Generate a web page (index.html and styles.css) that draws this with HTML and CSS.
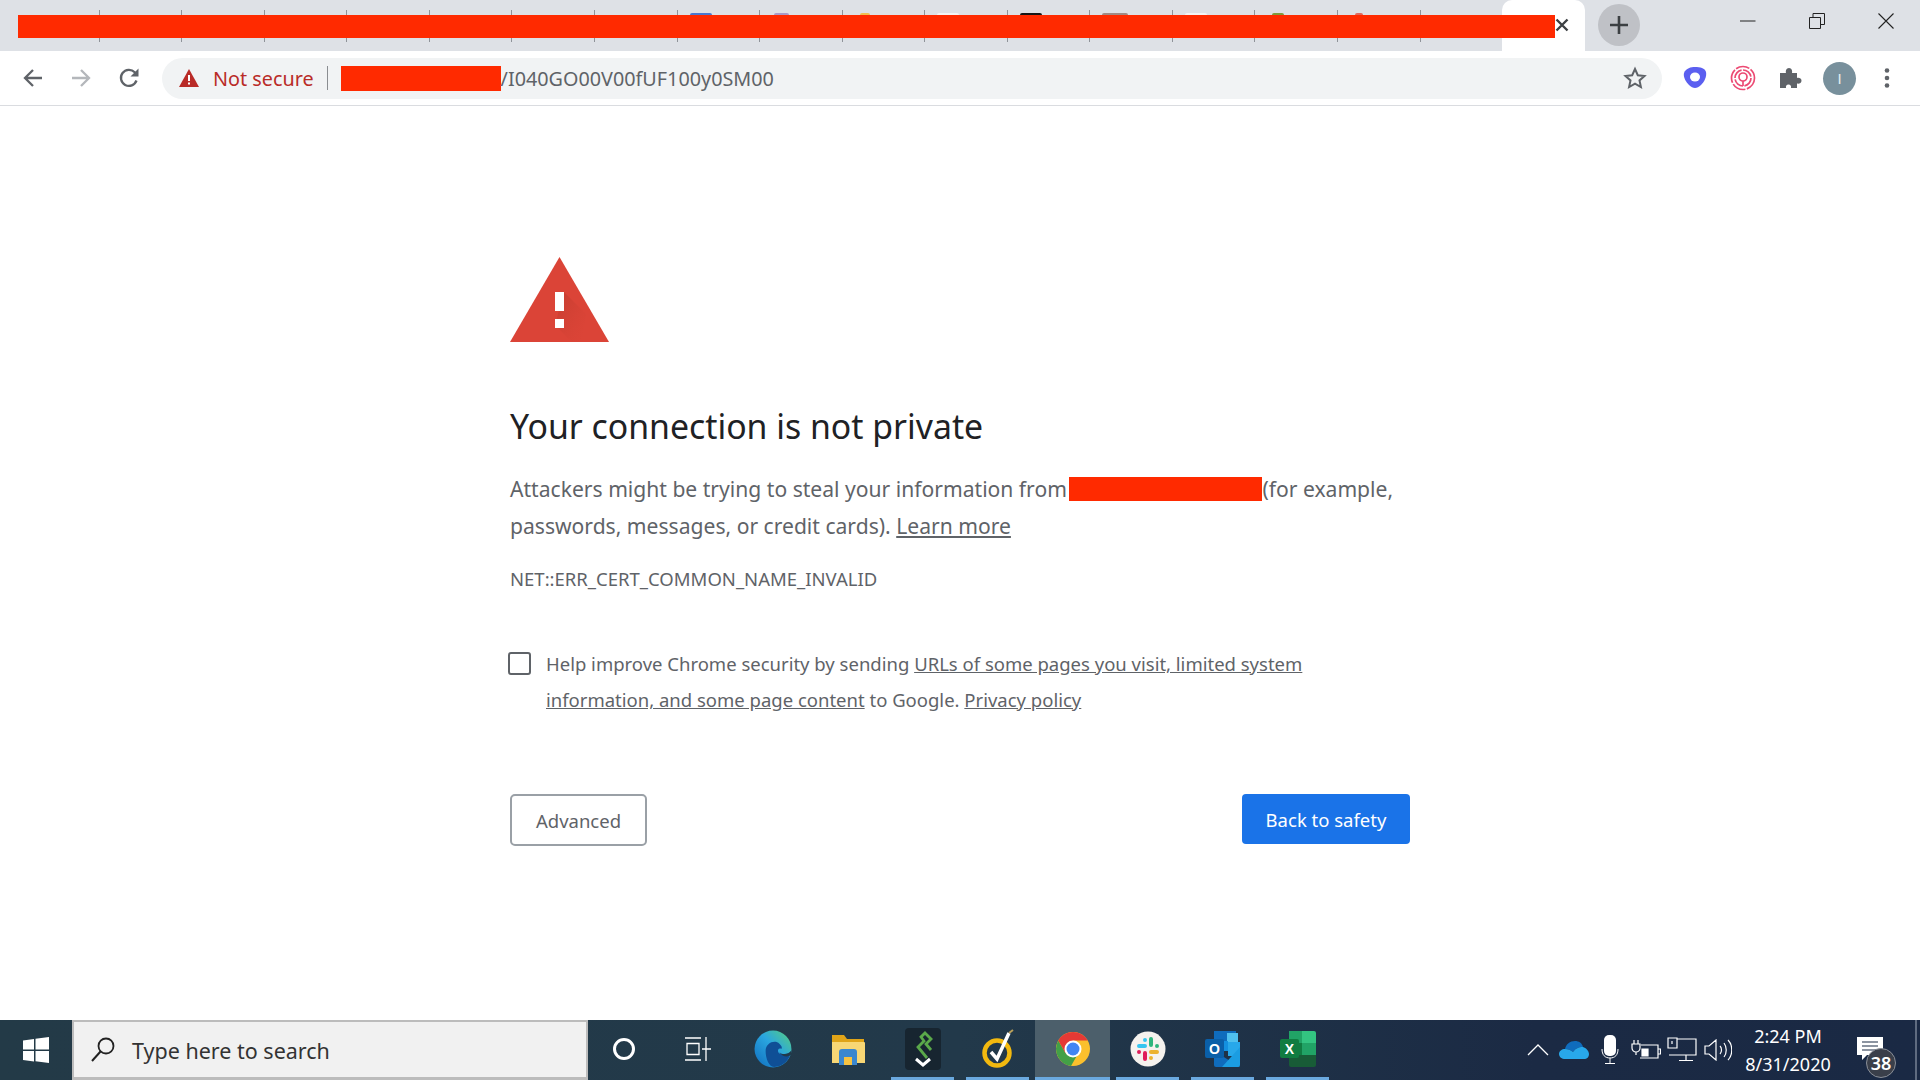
FILE: index.html
```html
<!DOCTYPE html>
<html lang="en">
<head>
    <meta charset="UTF-8">
    <meta name="viewport" content="width=device-width, initial-scale=1.0">
    <title>Privacy error</title>
    <link rel="stylesheet" href="styles.css">
</head>
<body>
    <div class="tabstrip">
        <div class="tabs">
            <div class="tab"></div><div class="tab"></div><div class="tab"></div>
            <div class="tab"></div><div class="tab"></div><div class="tab"></div>
            <div class="tab"></div><div class="tab"></div>
            <div class="tab"><i class="fav blue"></i></div>
            <div class="tab"><i class="fav purple"></i></div>
            <div class="tab"><i class="fav yellow"></i></div>
            <div class="tab"><i class="fav white"></i></div>
            <div class="tab"><i class="fav black"></i></div>
            <div class="tab"><i class="fav gray"></i></div>
            <div class="tab"><i class="fav white"></i></div>
            <div class="tab"><i class="fav green"></i></div>
            <div class="tab"><i class="fav red"></i></div>
            <div class="tab last"></div>
        </div>
        <div class="tab-active">
            <svg class="tab-close" width="16" height="16" viewBox="0 0 16 16"><path d="M2.500 2.500l11 11M13.500 2.500l-11 11" stroke="#3c4043" stroke-width="2.400"/></svg>
        </div>
        <div class="newtab">
            <svg width="20" height="20" viewBox="0 0 20 20"><path d="M10 1v18M1 10h18" stroke="#3c4043" stroke-width="2.600"/></svg>
        </div>
        <div class="winctrls">
            <svg width="16" height="16" viewBox="0 0 16 16"><path d="M0 8h15.500" stroke="#222" stroke-width="1"/></svg>
            <svg width="16" height="16" viewBox="0 0 16 16"><path d="M.5 4.500h11v11H.5zM4 4.500V.5h11.500v11H11.500" fill="none" stroke="#222" stroke-width="1"/></svg>
            <svg width="16" height="16" viewBox="0 0 16 16"><path d="M.5.5l15 15M15.500.5l-15 15" stroke="#222" stroke-width="1.100"/></svg>
        </div>
        <div class="redact-tabs"></div>
    </div>

    <div class="toolbar">
        <svg class="navbtn" width="22" height="22" viewBox="0 0 22 22"><path d="M20 11H3M11 3l-8 8 8 8" fill="none" stroke="#5f6368" stroke-width="2.300"/></svg>
        <svg class="navbtn" width="22" height="22" viewBox="0 0 22 22"><path d="M2 11h17M11 3l8 8-8 8" fill="none" stroke="#b4b7bb" stroke-width="2.300"/></svg>
        <svg class="navbtn" width="22" height="22" viewBox="0 0 22 22"><path d="M18.500 13.500A8 8 0 1 1 16.700 5.300L19 7.500" fill="none" stroke="#5f6368" stroke-width="2.300"/><path d="M20.500 1.500v8h-8z" fill="#5f6368"/></svg>
        <div class="omnibox">
            <svg class="warn-small" width="20" height="18" viewBox="0 0 20 18"><path d="M10 0l10 18H0z" fill="#b92b27"/><path d="M9 6h2v6H9zM9 13.500h2v2H9z" fill="#fff"/></svg>
            <span class="notsecure">Not secure</span>
            <span class="omni-sep"></span>
            <span class="redact-url"></span>
            <span class="url">/I040GO00V00fUF100y0SM00</span>
            <svg class="star" width="24" height="24" viewBox="0 0 24 24"><path d="M12 3l2.800 6.200 6.700.700-5 4.500 1.400 6.600-5.900-3.400L6.100 21l1.400-6.600-5-4.500 6.700-.700z" fill="none" stroke="#5f6368" stroke-width="2"/></svg>
        </div>
        <div class="exts">
            <svg width="26" height="26" viewBox="0 0 26 26"><path d="M2 8C4 3 9 2 13 2c5 0 10 1 11 5 1 5-2 10-5 13-2 2-4 3-6 3s-4-1-6-3C4 17 1 12 2 8z" fill="#5b5ff0"/><ellipse cx="13" cy="12" rx="5" ry="4.500" fill="#fff"/></svg>
            <svg width="26" height="26" viewBox="0 0 26 26" fill="none" stroke="#ec4a73" stroke-width="1.700"><circle cx="13" cy="13" r="11.500" stroke-dasharray="14 1.500"/><circle cx="13" cy="13" r="8" stroke-dasharray="11 1.500"/><circle cx="13" cy="12" r="4"/><path d="M13 16v5"/></svg>
            <svg width="24" height="24" viewBox="0 0 24 24"><path d="M2 7h6c-.6-2 .3-5 3-5s3.600 3 3 5h5v5c2-.6 4.500.3 4.500 2.700S21 18 19 17.500V22h-6c.5-2-.6-3.500-2.500-3.500S7.500 20 8 22H2z" fill="#5f6368"/></svg>
            <span class="avatar">I</span>
            <svg width="24" height="24" viewBox="0 0 24 24"><circle cx="12" cy="4.500" r="2.300" fill="#5f6368"/><circle cx="12" cy="12" r="2.300" fill="#5f6368"/><circle cx="12" cy="19.500" r="2.300" fill="#5f6368"/></svg>
        </div>
    </div>

    <div class="main">
        <div class="interstitial">
            <svg class="warn-big" width="99" height="85" viewBox="0 0 99 85">
                <defs>
                    <linearGradient id="warnshade" x1="0" y1="0" x2="1" y2="1"><stop offset="0" stop-color="#b8392c" stop-opacity=".7"/><stop offset="1" stop-color="#db4437" stop-opacity="0"/></linearGradient>
                </defs>
                <path d="M49.500 0L99 85H0z" fill="#db4437"/>
                <path d="M54 35l22 22-4 28H62L45 68z" fill="url(#warnshade)"/>
                <path d="M45 35h9v19h-9zM45 62h9v9h-9z" fill="#fff"/>
            </svg>
            <h1>Your connection is not private</h1>
            <p class="desc">Attackers might be trying to steal your information from <span class="redact-host"></span>(for example, passwords, messages, or credit cards). <a href="#">Learn more</a></p>
            <div class="errcode">NET::ERR_CERT_COMMON_NAME_INVALID</div>
            <div class="optin">
                <span class="checkbox"></span>
                <p>Help improve Chrome security by sending <a href="#">URLs of some pages you visit, limited system information, and some page content</a> to Google. <a href="#">Privacy policy</a></p>
            </div>
            <div class="btns">
                <button class="advanced" type="button">Advanced</button>
                <button class="safety" type="button">Back to safety</button>
            </div>
        </div>
    </div>

    <div class="taskbar">
        <div class="start">
            <svg width="26" height="26" viewBox="0 0 26 26"><path d="M0 3.500l11-1.500v10.500H0zM12.500 1.800L26 0v12.500H12.500zM0 14h11v10.500L0 23zM12.500 14H26v12l-13.500-1.800z" fill="#fff"/></svg>
        </div>
        <div class="searchbox">
            <svg width="28" height="28" viewBox="0 0 28 28"><circle cx="17" cy="10" r="7.500" fill="none" stroke="#222" stroke-width="1.800"/><path d="M11.500 15.500L3 25" stroke="#222" stroke-width="2"/></svg>
            <span>Type here to search</span>
        </div>
        <div class="slot cortana">
            <svg width="24" height="24" viewBox="0 0 24 24"><circle cx="12" cy="12" r="9.500" fill="none" stroke="#fff" stroke-width="3"/></svg>
        </div>
        <div class="slot">
            <svg width="26" height="26" viewBox="0 0 26 26" fill="none" stroke="#fff" stroke-width="1.300"><path d="M0 2h16M0 24h16M2 7.500h12v11H2zM21 1v24M26 13h-9"/></svg>
        </div>
        <div class="slot">
            <svg width="38" height="38" viewBox="0 0 36 36">
                <defs>
                    <linearGradient id="edge1" x1="0" y1="1" x2="1" y2="0"><stop offset="0" stop-color="#0f6cbd"/><stop offset=".55" stop-color="#2aa6e0"/><stop offset="1" stop-color="#58cf7c"/></linearGradient>
                </defs>
                <circle cx="18" cy="18" r="17.500" fill="url(#edge1)"/>
                <path d="M11 20C11 12 20 9 24 13c2 2 3 3 2 5-2-1-4 0-3 3 2 3 9 3 12-1-1 9-8 15-16 15C14 35 11 27 11 20z" fill="#0f4f96"/>
                <path d="M24 21c3 3 9 2 11-1l.5 3c-3 3-8 3-11.500-2z" fill="#22394a"/>
            </svg>
        </div>
        <div class="slot">
            <svg width="36" height="32" viewBox="0 0 36 32"><path d="M2 2h12l3 4h17v4H2z" fill="#e0a418"/><path d="M2 9h32a1 1 0 0 1 1 1v20H2z" fill="#f8d775"/><path d="M9 32V19a3 3 0 0 1 3-3h12a3 3 0 0 1 3 3v13h-5v-8h-8v8z" fill="#3a87cf"/><path d="M14 24h8v8h-8z" fill="#f5c242"/></svg>
        </div>
        <div class="slot run">
            <svg width="36" height="42" viewBox="0 0 36 42"><rect width="36" height="42" rx="4" fill="#172530"/><path d="M22 30L13 19l6-6-3-4 4-4 6 6-5 5 5 6" fill="none" stroke="#5aa84a" stroke-width="2.800"/><path d="M11 31l7 6 7-6" fill="none" stroke="#fff" stroke-width="3"/></svg>
        </div>
        <div class="slot run">
            <svg width="34" height="40" viewBox="0 0 34 40"><circle cx="16" cy="24" r="12.500" fill="none" stroke="#f2b90f" stroke-width="4.500"/><path d="M10 23l6 7L28 4" fill="none" stroke="#fff" stroke-width="3.500"/><path d="M28 4l4-3" stroke="#b9a05a" stroke-width="2"/></svg>
        </div>
        <div class="slot run current">
            <svg width="36" height="36" viewBox="0 0 36 36"><circle cx="18" cy="18" r="17" fill="#fbc02d"/><path d="M3.300 9.500A17 17 0 0 0 16 34.900l7.300-12.600H10.600z" fill="#43a047"/><path d="M18 1a17 17 0 0 1 14.700 8.500H18l-7.400 12.800-7.300-12.800A17 17 0 0 1 18 1z" fill="#e53935"/><circle cx="18" cy="18" r="8.500" fill="#fff"/><circle cx="18" cy="18" r="6.500" fill="#4285f4"/></svg>
        </div>
        <div class="slot run">
            <svg width="36" height="36" viewBox="0 0 36 36" fill="none" stroke-width="4" stroke-linecap="round"><circle cx="18" cy="18" r="17.500" fill="#f5f2ee"/><path d="M9 15h6M15 9h0" stroke="#36c5f0"/><path d="M21 8v6M27 15h0" stroke="#2eb67d"/><path d="M21 21h6M21 27h0" stroke="#ecb22e"/><path d="M15 22v6M9 21h0" stroke="#e01e5a"/></svg>
        </div>
        <div class="slot run">
            <svg width="36" height="38" viewBox="0 0 36 38"><path d="M9 1h22v10H9z" fill="#0f6cbd"/><path d="M22 3h11v9H22z" fill="#50c0ee"/><path d="M9 11h14v10H9z" fill="#1490df"/><path d="M23 12h12v14H23z" fill="#28a8ea"/><path d="M9 21l26 16H11a2 2 0 0 1-2-2z" fill="#0f6cbd"/><path d="M35 17v18a2 2 0 0 1-2 2H17z" fill="#1b9de2"/><rect x="0" y="9" width="19" height="19" rx="2" fill="#0a5fa8"/><text class="ic-letter" x="9.500" y="24">O</text></svg>
        </div>
        <div class="slot run">
            <svg width="36" height="38" viewBox="0 0 36 38"><path d="M9 1h13v12H9z" fill="#21a366"/><path d="M22 1h12a2 2 0 0 1 2 2v10H22z" fill="#33c481"/><path d="M9 13h13v12H9z" fill="#107c41"/><path d="M22 13h14v12H22z" fill="#21a366"/><path d="M9 25h27v10a2 2 0 0 1-2 2H11a2 2 0 0 1-2-2z" fill="#185c37"/><rect x="0" y="9" width="19" height="19" rx="2" fill="#107c41"/><text class="ic-letter" x="9.500" y="24">X</text></svg>
        </div>
        <div class="tray">
            <svg width="22" height="14" viewBox="0 0 22 14"><path d="M1 12L11 2l10 10" fill="none" stroke="#fff" stroke-width="1.300"/></svg>
            <svg width="30" height="20" viewBox="0 0 30 20"><path d="M6 9c1-5 5-8 10-8 4 0 7 2 8 6-5 0-8 2-10 5-2-2-5-3-8-3z" fill="#0f6cbd"/><path d="M24 7c3 1 6 4 6 7 0 3-2 5-5 5H6c-3 0-6-2-6-5 0-3 3-5 6-5 3 0 6 1 8 3 2-3 5-5 10-5z" fill="#28a8ea"/></svg>
            <svg width="20" height="30" viewBox="0 0 20 30"><rect x="4" y="0" width="12" height="21" rx="5" fill="#fff"/><path d="M2 14c0 6 3 9 8 9s8-3 8-9M10 23v5M5 28.500h10" fill="none" stroke="#fff" stroke-width="1"/></svg>
            <svg width="30" height="22" viewBox="0 0 30 22" fill="none" stroke="#fff" stroke-width="1.200"><path d="M10 6h17v13H9M27 10h2.500v5H27"/><path d="M3 1v4M7 1v4M1 5h8v4a4 4 0 0 1-8 0zM5 13v3"/><path d="M11 10h6v7h-6z" fill="#fff"/></svg>
            <svg width="30" height="26" viewBox="0 0 30 26" fill="none" stroke="#fff" stroke-width="1.200"><path d="M10 2h19v16H2M19 18v5M12 23.500h14M1 1h9v10H1zM5 4v3"/></svg>
            <svg width="28" height="22" viewBox="0 0 28 22" fill="none" stroke="#fff" stroke-width="1.200"><path d="M1 7h4l7-6v20l-7-6H1zM16 7c2 2 2 6 0 8M20 4c3 4 3 10 0 14M24 1c5 5 5 15 0 20"/></svg>
        </div>
        <div class="clock">
            <div>2:24 PM</div>
            <div>8/31/2020</div>
        </div>
        <div class="notify">
            <svg width="26" height="24" viewBox="0 0 26 24"><path d="M0 0h26v18H10l-5 5v-5H0z" fill="#fff"/><path d="M5 5h16M5 9h16M5 13h16" stroke="#1b2a44" stroke-width="1.200"/></svg>
            <span class="badge">38</span>
        </div>
    </div>
</body>
</html>
```

FILE: styles.css
```css
*{
    box-sizing: border-box;
}
html, body{
    margin: 0;
    padding: 0;
    height: 100%;
}
body{
    display: flex;
    flex-direction: column;
    width: 1920px;
    height: 1080px;
    overflow: hidden;
    background-color: #fff;
    font-family: "Noto Sans", "Open Sans", sans-serif;
}

/* tab strip */
.tabstrip{
    height: 51px;
    background-color: #dee1e6;
    display: flex;
    padding-left: 17px;
    position: relative;
    flex-shrink: 0;
}
.tabs{
    width: 1485px;
    display: flex;
    padding-top: 10px;
}
.tab{
    flex: 1;
    height: 32px;
    border-right: 1px solid #8f9399;
    padding: 3px 0 0 12px;
}
.tab.last{
    border-right: none;
}
.fav{
    display: block;
    width: 22px;
    height: 16px;
    border-radius: 2px;
}
.fav.blue{ background-color: #4a78d0; }
.fav.purple{ width: 15px; margin-left: 2px; background-color: #a99ac8; }
.fav.yellow{ width: 10px; margin-left: 5px; background-color: #f0c050; }
.fav.white{ background-color: #f4f4f4; }
.fav.black{ background-color: #161616; }
.fav.gray{ width: 26px; background-color: #a08a84; }
.fav.green{ width: 12px; margin-left: 5px; background-color: #7f9a3c; }
.fav.red{ width: 8px; margin-left: 5px; background-color: #e0685c; }
.tab-active{
    width: 83px;
    height: 51px;
    background-color: #fff;
    border-radius: 10px 10px 0 0;
    display: flex;
    align-items: center;
    justify-content: flex-end;
    padding: 0 15px 2px 0;
}
.newtab{
    width: 42px;
    height: 42px;
    margin: 4px 0 0 13px;
    border-radius: 50%;
    background-color: #bfc1c6;
    display: flex;
    align-items: center;
    justify-content: center;
}
.winctrls{
    margin-left: auto;
    display: flex;
    gap: 53px;
    padding: 13px 26px 0 0;
    align-items: flex-start;
}
.redact-tabs{
    position: absolute;
    left: 18px;
    top: 15px;
    width: 1537px;
    height: 23px;
    background-color: #ff2a00;
}

/* toolbar */
.toolbar{
    height: 55px;
    border-bottom: 1px solid #dadce0;
    display: flex;
    align-items: center;
    padding-left: 22px;
    flex-shrink: 0;
}
.navbtn{
    margin-right: 26px;
}
.omnibox{
    width: 1500px;
    height: 41px;
    margin-left: -4px;
    background-color: #f1f3f4;
    border-radius: 21px;
    display: flex;
    align-items: center;
    padding-left: 17px;
    font-size: 19.800px;
    color: #5f6368;
}
.warn-small{
    margin-right: 14px;
}
.notsecure{
    color: #b92b27;
}
.omni-sep{
    width: 1px;
    height: 24px;
    background-color: #8a8d91;
    margin: 0 13px;
}
.redact-url{
    width: 160px;
    height: 25px;
    background-color: #ff2a00;
}
.star{
    margin-left: auto;
    margin-right: 15px;
}
.exts{
    display: flex;
    align-items: center;
    gap: 22px;
    margin-left: 20px;
}
.avatar{
    width: 33px;
    height: 33px;
    margin: 0 -3px 0 -1px;
    border-radius: 50%;
    background-color: #78909c;
    color: #e6ecef;
    font-family: "Liberation Sans", sans-serif;
    font-size: 15px;
    display: flex;
    align-items: center;
    justify-content: center;
}

/* page */
.main{
    flex: 1;
}
.interstitial{
    width: 900px;
    margin: 0 auto;
    padding-top: 151px;
    color: #5f6368;
    font-size: 21.100px;
}
.warn-big{
    display: block;
}
h1{
    margin: 60px 0 0;
    font-size: 33.800px;
    line-height: 48px;
    font-weight: 400;
    color: #202124;
}
.desc{
    margin: 21px 0 0;
    line-height: 36.500px;
}
.redact-host{
    display: inline-block;
    width: 193px;
    height: 24px;
    margin-left: -3px;
    background-color: #ff2a00;
    vertical-align: -4px;
}
a{
    color: #5f6368;
}
.errcode{
    margin-top: 21px;
    font-size: 18.500px;
    line-height: 28px;
}
.optin{
    margin-top: 53px;
    display: flex;
    align-items: flex-start;
    font-size: 18.500px;
    margin-left: -2px;
}
.checkbox{
    width: 23px;
    height: 23px;
    border: 2px solid #5f6368;
    border-radius: 3px;
    margin: 6px 15px 0 0;
    flex-shrink: 0;
}
.optin p{
    margin: 0;
    line-height: 36px;
    width: 800px;
}
.btns{
    margin-top: 76px;
    display: flex;
    justify-content: space-between;
    align-items: flex-start;
}
button{
    font-family: inherit;
    font-size: 18.500px;
    border-radius: 4px;
    cursor: pointer;
}
.advanced{
    width: 137px;
    height: 52px;
    border: 2px solid #9aa0a6;
    border-radius: 5px;
    background-color: #fff;
    color: #5f6368;
}
.safety{
    width: 168px;
    height: 50px;
    border: none;
    background-color: #1a73e8;
    color: #fff;
}

/* taskbar */
.taskbar{
    height: 60px;
    flex-shrink: 0;
    display: flex;
    align-items: stretch;
    background: linear-gradient(90deg, #233a47 0%, #22394a 50%, #1b2a44 80%, #1a2944 100%);
}
.start{
    width: 72px;
    display: flex;
    align-items: center;
    justify-content: center;
}
.searchbox{
    width: 516px;
    background-color: #f1f1f1;
    border: 2px solid #bcbcbc;
    border-bottom-width: 3px;
    display: flex;
    align-items: center;
    padding-left: 15px;
    gap: 15px;
    font-size: 21.500px;
    color: #333;
}
.searchbox span{
    padding-top: 2px;
}
.slot{
    width: 75px;
    display: flex;
    align-items: center;
    justify-content: center;
    position: relative;
    padding-bottom: 2px;
}
.slot.cortana{
    width: 72px;
}
.slot.run::after{
    content: '';
    position: absolute;
    left: 6px;
    right: 6px;
    bottom: 0;
    height: 3px;
    background-color: #6aa9df;
}
.slot.current{
    background-color: #4c5f6b;
}
.slot.current::after{
    left: 0;
    right: 0;
}
.ic-letter{
    font-family: "Liberation Sans", sans-serif;
    font-size: 14px;
    font-weight: bold;
    fill: #fff;
    text-anchor: middle;
}
.tray{
    margin-left: auto;
    display: grid;
    grid-template-columns: repeat(6, 36px);
    justify-items: center;
    align-items: center;
}
.clock{
    width: 104px;
    text-align: center;
    color: #fff;
    font-size: 18px;
    line-height: 28px;
    padding-top: 2px;
}
.notify{
    width: 80px;
    position: relative;
    padding: 17px 0 0 17px;
}
.notify::after{
    content: '';
    position: absolute;
    right: 3px;
    top: 0;
    bottom: 0;
    width: 2px;
    background-color: #5f6b80;
}
.badge{
    position: absolute;
    left: 26px;
    top: 28px;
    width: 30px;
    height: 30px;
    border-radius: 50%;
    background-color: #3a3f4a;
    border: 1px solid #8a8f98;
    color: #fff;
    font-size: 18px;
    font-weight: 600;
    display: flex;
    align-items: center;
    justify-content: center;
}
```
